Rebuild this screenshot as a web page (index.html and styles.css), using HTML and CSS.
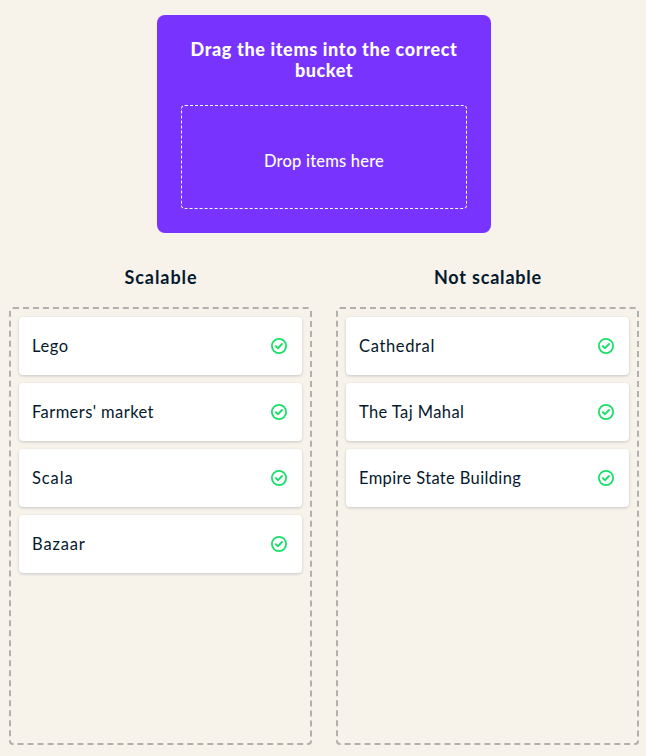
FILE: index.html
```html
<!DOCTYPE html>
<html lang="en">
<head>
<meta charset="utf-8">
<title>Drag and drop</title>
<link rel="stylesheet" href="styles.css">
</head>
<body>
<svg class="symbols" aria-hidden="true">
  <symbol id="check" viewBox="0 0 18 18">
    <circle cx="9" cy="9" r="7.1" fill="none" stroke="currentColor" stroke-width="1.8"/>
    <path d="M5.9 9.2 8.1 11.2 12 7" fill="none" stroke="currentColor" stroke-width="1.9" stroke-linecap="round" stroke-linejoin="round"/>
  </symbol>
</svg>
<main class="exercise">
  <section class="source">
    <h1 class="source-title"><span class="line-one">Drag the items into the correct</span> <span class="line-two">bucket</span></h1>
    <div class="dropzone"><span class="hint">Drop items here</span></div>
  </section>
  <div class="buckets">
    <section class="bucket">
      <h2 class="bucket-title scalable">Scalable</h2>
      <ul class="list">
        <li class="card"><span class="label lego">Lego</span><svg class="icon"><use href="#check"/></svg></li>
        <li class="card"><span class="label market">Farmers' market</span><svg class="icon"><use href="#check"/></svg></li>
        <li class="card"><span class="label scala">Scala</span><svg class="icon"><use href="#check"/></svg></li>
        <li class="card"><span class="label bazaar">Bazaar</span><svg class="icon"><use href="#check"/></svg></li>
      </ul>
    </section>
    <section class="bucket">
      <h2 class="bucket-title not-scalable">Not scalable</h2>
      <ul class="list">
        <li class="card"><span class="label cathedral">Cathedral</span><svg class="icon"><use href="#check"/></svg></li>
        <li class="card"><span class="label taj">The Taj Mahal</span><svg class="icon"><use href="#check"/></svg></li>
        <li class="card"><span class="label empire">Empire State Building</span><svg class="icon"><use href="#check"/></svg></li>
      </ul>
    </section>
  </div>
</main>
</body>
</html>
```
FILE: styles.css
```css
* { box-sizing: border-box; }
body {
  margin: 0;
  background: #f7f3eb;
  color: #05192d;
  font: 16px/20px Lato, "Liberation Sans", sans-serif;
}
.symbols { display: none; }
.exercise {
  display: flex;
  flex-direction: column;
  height: 756px;
  padding: 15px 7px 11px 9px;
}
.source {
  width: 334px;
  height: 218px;
  margin-left: 148px;
  padding: 24px;
  border-radius: 8px;
  background: #7933ff;
  color: #fff;
  text-align: center;
}
.source-title {
  margin: 0 0 24px;
  font-size: 18px;
  font-weight: 900;
  line-height: 21px;
}
.line-one, .line-two { display: inline-block; white-space: nowrap; }
.line-one { letter-spacing: .64px; }
.line-two { letter-spacing: .55px; }
.dropzone {
  display: flex;
  align-items: center;
  justify-content: center;
  height: 104px;
  padding-top: 8px;
  border: 1px dashed #fff;
  border-radius: 4px;
  font-weight: 500;
}
.hint { font-size: 16.5px; letter-spacing: .2px; }
.buckets { display: flex; flex: 1; gap: 24px; }
.bucket { display: flex; flex-direction: column; width: 303px; }
.bucket-title {
  margin: 32px 0 18px;
  padding-left: 1px;
  font-size: 18px;
  font-weight: 700;
  line-height: 24px;
  text-align: center;
}
.scalable { letter-spacing: .95px; }
.not-scalable { letter-spacing: .8px; }
.list {
  display: flex;
  flex: 1;
  flex-direction: column;
  gap: 8px;
  margin: 0;
  padding: 8px;
  border: 2px dashed #b1b0ad;
  border-radius: 4px;
  list-style: none;
}
.card {
  display: flex;
  align-items: center;
  justify-content: space-between;
  height: 58px;
  padding: 0 14px 0 13px;
  border-radius: 4px;
  background: #fff;
  box-shadow: 0 1px 3px rgba(5, 25, 45, .2);
}
.label { font-size: 16.5px; }
.lego { letter-spacing: .6px; }
.market { letter-spacing: .42px; }
.scala { letter-spacing: .9px; }
.bazaar { letter-spacing: .85px; }
.cathedral { letter-spacing: .65px; }
.taj { letter-spacing: .4px; }
.empire { letter-spacing: .36px; }
.icon { width: 18px; height: 18px; color: #18df69; }
```
